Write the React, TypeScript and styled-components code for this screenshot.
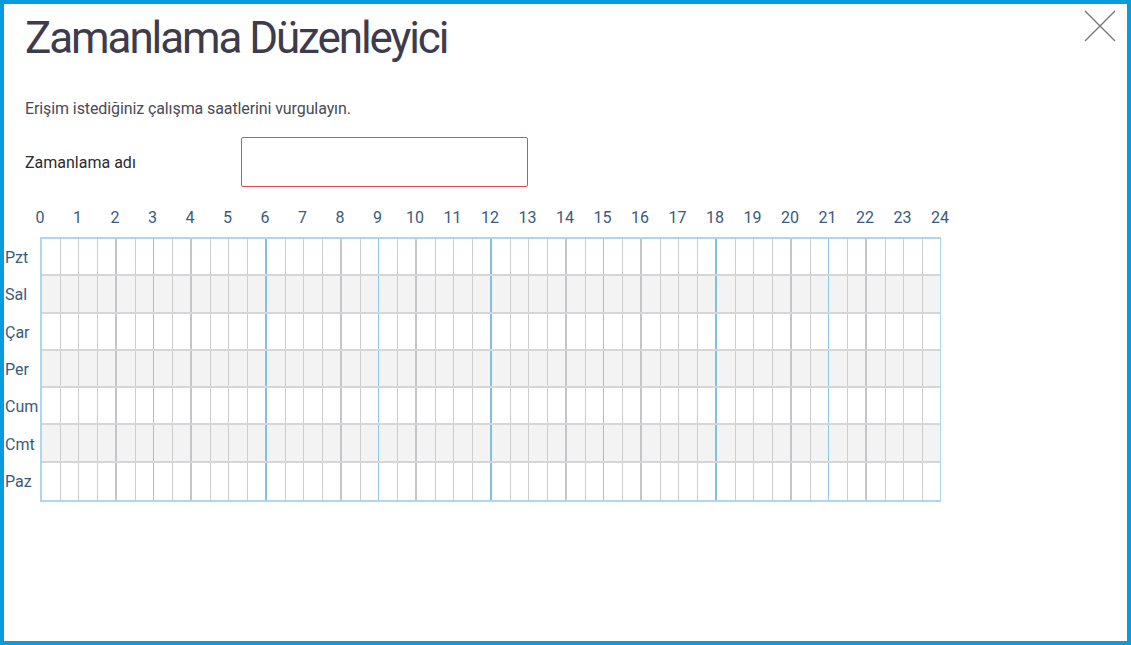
import React from "react";
import styled, { createGlobalStyle } from "styled-components";

const GlobalStyle = createGlobalStyle`
  html, body {
    margin: 0;
    padding: 0;
    background: #ffffff;
  }
  body {
    font-family: Roboto, "Noto Sans", "Liberation Sans", sans-serif;
  }
`;

const Frame = styled.div`
  width: 1131px;
  height: 645px;
  box-sizing: border-box;
  border: 4px solid #0a9bdc;
  background: #ffffff;
  padding: 0 0 0 1px;
  overflow: hidden;
`;

const Header = styled.div`
  display: flex;
  justify-content: space-between;
  align-items: flex-start;
`;

const Title = styled.h1`
  margin: 8px 0 0 20px;
  font-size: 44px;
  line-height: 52px;
  font-weight: 400;
  letter-spacing: -2.1px;
  color: #3d3b4c;
`;

const CloseButton = styled.button`
  margin: 5px 10px 0 0;
  width: 34px;
  height: 34px;
  padding: 0;
  border: none;
  background: transparent;
  cursor: pointer;
  display: flex;
  align-items: center;
  justify-content: center;
`;

const Intro = styled.p`
  margin: 34px 0 0 20px;
  font-size: 16px;
  line-height: 22px;
  letter-spacing: -0.1px;
  color: #4b4a58;
`;

const NameRow = styled.div`
  display: flex;
  align-items: center;
  margin: 17px 0 0 20px;
`;

const NameLabel = styled.label`
  width: 216px;
  font-size: 16px;
  color: #2b2b30;
`;

const NameInput = styled.input`
  width: 287px;
  height: 50px;
  box-sizing: border-box;
  border: 1px solid #e14a5a;
  border-radius: 2px;
  outline: none;
  font-family: inherit;
  font-size: 16px;
  padding: 0 10px;
`;

const Schedule = styled.div`
  margin-top: 21px;
`;

const HourRow = styled.div`
  display: flex;
  height: 29px;
  margin-left: 35px;
  width: 900px;
`;

const HourLabel = styled.span`
  width: 37.5px;
  flex: none;
  transform: translateX(-50%);
  text-align: center;
  font-size: 16px;
  line-height: 20px;
  color: #3a5b7b;
`;

const LastHour = styled(HourLabel)`
  width: 0;
  overflow: visible;
  display: flex;
  justify-content: center;
  transform: none;
`;

const Body = styled.div`
  display: flex;
`;

const DayColumn = styled.div`
  width: 35px;
  flex: none;
  padding-top: 2px;
`;

const DayLabel = styled.div`
  height: 37.3px;
  display: flex;
  align-items: center;
  font-size: 16px;
  color: #3a5b7b;
`;

const Grid = styled.div`
  width: 901px;
  border: 2px solid #acd6f1;
  border-right-width: 1px;
  box-sizing: border-box;
  display: flex;
  flex-direction: column;
`;

const DayRow = styled.div<{ $shaded: boolean; $last: boolean }>`
  display: flex;
  height: 37.3px;
  box-sizing: border-box;
  background: ${(p) => (p.$shaded ? "#f3f3f3" : "#ffffff")};
  border-bottom: ${(p) => (p.$last ? "none" : "2px solid #d6d6d8")};
`;

type Mark = "none" | "half" | "hour" | "even" | "third" | "sixth";

const lineFor: Record<Mark, string> = {
  none: "none",
  half: "1px solid #cdcdd0",
  hour: "1px solid #cdcdd0",
  even: "2px solid #c4c4c9",
  third: "1px solid #8cc6ec",
  sixth: "2px solid #7fbfea",
};

const Cell = styled.div<{ $mark: Mark }>`
  flex: 1 1 0;
  box-sizing: border-box;
  border-left: ${(p) => lineFor[p.$mark]};
`;

const days = ["Pzt", "Sal", "Çar", "Per", "Cum", "Cmt", "Paz"];
const hours = Array.from({ length: 24 }, (_, i) => i);

function markFor(index: number): Mark {
  if (index === 0) return "none";
  if (index % 2 === 1) return "half";
  const h = index / 2;
  if (h % 6 === 0) return "sixth";
  if (h % 3 === 0) return "third";
  if (h % 2 === 0) return "even";
  return "hour";
}

const CloseIcon = () => (
  <svg width="32" height="32" viewBox="0 0 32 32">
    <path d="M1 1 L31 31 M31 1 L1 31" stroke="#77767e" strokeWidth="1.4" fill="none" />
  </svg>
);

export default function App() {
  return (
    <>
      <GlobalStyle />
      <Frame>
        <Header>
          <Title>Zamanlama Düzenleyici</Title>
          <CloseButton aria-label="Kapat">
            <CloseIcon />
          </CloseButton>
        </Header>
        <Intro>Erişim istediğiniz çalışma saatlerini vurgulayın.</Intro>
        <NameRow>
          <NameLabel>Zamanlama adı</NameLabel>
          <NameInput type="text" />
        </NameRow>
        <Schedule>
          <HourRow>
            {hours.map((h) => (
              <HourLabel key={h}>{h}</HourLabel>
            ))}
            <LastHour>24</LastHour>
          </HourRow>
          <Body>
            <DayColumn>
              {days.map((d) => (
                <DayLabel key={d}>{d}</DayLabel>
              ))}
            </DayColumn>
            <Grid>
              {days.map((d, i) => (
                <DayRow key={d} $shaded={i % 2 === 1} $last={i === days.length - 1}>
                  {Array.from({ length: 48 }, (_, c) => (
                    <Cell key={c} $mark={markFor(c)} />
                  ))}
                </DayRow>
              ))}
            </Grid>
          </Body>
        </Schedule>
      </Frame>
    </>
  );
}
